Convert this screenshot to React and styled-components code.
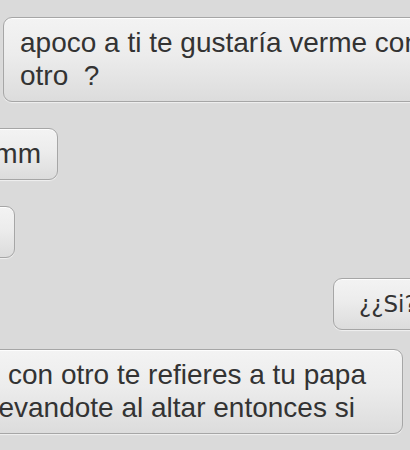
import React from "react";
import styled, { createGlobalStyle } from "styled-components";

const GlobalStyle = createGlobalStyle`
    html, body {
        margin: 0;
        padding: 0;
        background: #dadada;
    }
`;

const Screen = styled.div`
    width: 410px;
    height: 450px;
    overflow: hidden;
    background: #dadada;
    display: flex;
    flex-direction: column;
    padding-top: 17px;
    box-sizing: border-box;
`;

const Row = styled.div`
    display: flex;
    margin-left: ${(p) => p.$offset}px;
    margin-bottom: ${(p) => p.$gap}px;
    flex-shrink: 0;
`;

const Bubble = styled.div`
    flex-shrink: 0;
    width: ${(p) => p.$width}px;
    box-sizing: border-box;
    padding: ${(p) => (p.$alt ? "9px" : "8px")} ${(p) => p.$padRight}px ${(p) => (p.$alt ? "8px" : "9px")} ${(p) => p.$padLeft}px;
    border: 1px solid #a6a6a6;
    border-radius: 9px;
    background: linear-gradient(to bottom, #f3f3f3 0%, #ececec 45%, #dcdcdc 100%);
    box-shadow: 0 1px 1px rgba(255, 255, 255, 0.6), inset 0 1px 0 rgba(255, 255, 255, 0.8);
    color: #333333;
    font-family: ${(p) => (p.$alt ? '"DejaVu Sans"' : '"Liberation Sans"')}, Arial, sans-serif;
    font-size: ${(p) => (p.$alt ? "23px" : "28px")};
    line-height: 33px;
    white-space: nowrap;
    text-align: ${(p) => p.$align || "left"};
`;

const Line = styled.div`
    margin-left: ${(p) => p.$shift || 0}px;
`;

function App() {
    return (
        <>
            <GlobalStyle />
            <Screen>
                <Row $offset={3} $gap={26}>
                    <Bubble $width={440} $padLeft={16} $padRight={17}>
                        <Line>apoco a ti te gustaría verme con</Line>
                        <Line>otro&nbsp; ?</Line>
                    </Bubble>
                </Row>
                <Row $offset={-30} $gap={26}>
                    <Bubble $width={88} $padLeft={20} $padRight={16} $align="right">
                        <Line>mm</Line>
                    </Bubble>
                </Row>
                <Row $offset={-60} $gap={20}>
                    <Bubble $width={75} $padLeft={20} $padRight={16}>
                        <Line>&nbsp;</Line>
                    </Bubble>
                </Row>
                <Row $offset={333} $gap={19}>
                    <Bubble $width={110} $padLeft={25} $padRight={20} $alt>
                        <Line>¿¿Si?</Line>
                    </Bubble>
                </Row>
                <Row $offset={-30} $gap={0}>
                    <Bubble $width={433} $padLeft={15} $padRight={20}>
                        <Line $shift={22}>con otro te refieres a tu papa</Line>
                        <Line>llevandote al altar entonces si</Line>
                    </Bubble>
                </Row>
            </Screen>
        </>
    );
}

export default App;
